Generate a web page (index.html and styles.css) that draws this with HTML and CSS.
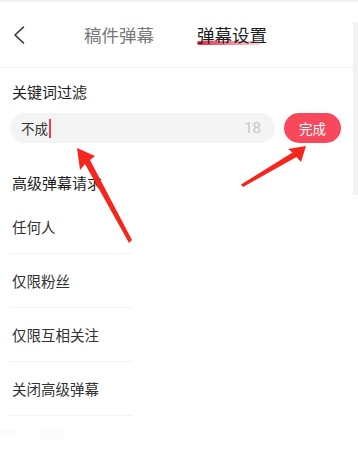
FILE: index.html
```html
<!DOCTYPE html>
<html lang="zh-CN">
<head>
    <meta charset="UTF-8">
    <meta name="viewport" content="width=device-width, initial-scale=1.0">
    <title>弹幕设置</title>
    <link rel="stylesheet" href="styles.css">
</head>
<body>
    <div id="page">
        <div id="main">
            <div id="header">
                <button class="back">
                    <svg width="12" height="20" viewBox="0 0 12 20">
                        <path d="M10.5 2 L2 10 L10.5 18" fill="none" stroke="#333" stroke-width="1.6" stroke-linecap="round" stroke-linejoin="round"/>
                    </svg>
                </button>
                <div class="tab">稿件弹幕</div>
                <div class="tab active">弹幕设置</div>
            </div>

            <div class="section-title first">关键词过滤</div>
            <div class="filter-row">
                <div class="filter-input">
                    <span class="typed">不成</span><span class="caret"></span>
                    <span class="count">18</span>
                </div>
                <button class="done">完成</button>
            </div>

            <div class="section-title">高级弹幕请求</div>
            <ul class="options">
                <li>任何人</li>
                <li>仅限粉丝</li>
                <li>仅限互相关注</li>
                <li>关闭高级弹幕</li>
            </ul>
            <div class="ghost">
                <span class="g1"></span>
                <span class="g2"></span>
            </div>
        </div>
        <div id="edge"></div>
    </div>

    <!-- annotation arrows -->
    <svg id="marks" width="358" height="463" viewBox="0 0 358 463">
        <g fill="#f5261e">
            <path d="M77 148 L95 156 L90 160 L132 240 L129 243 L85 164 L80 170 Z"/>
            <path d="M306 146 L301 162 L296.5 157 L243 187 L241 184.5 L292.5 152.5 L288 149 Z"/>
        </g>
    </svg>
</body>
</html>
```

FILE: styles.css
```css
body {
    font-family: "Noto Sans", "Noto Sans CJK SC", sans-serif;
    margin: 0;
    padding: 0;
    background: #fff;
    color: #222;
    width: 358px;
    height: 463px;
    overflow: hidden;
    position: relative;
}
#page {
    display: flex;
    border-top: 2px solid #f3f3f3;
}
#main {
    width: 353px;
}
#edge {
    width: 5px;
    height: 173px;
    margin-top: 20px;
    background-color: #f2f2f2;
}
#header {
    display: flex;
    align-items: center;
    height: 65px;
    border-bottom: 1px solid #f1f1f1;
}
.back {
    border: none;
    background: none;
    padding: 0;
    margin: 0 0 0 13px;
    width: 12px;
    height: 20px;
    display: flex;
    align-items: center;
}
.tab {
    font-size: 17.5px;
    line-height: 24px;
    color: #777;
    margin-left: 59px;
    position: relative;
    z-index: 0;
}
.tab.active {
    color: #1e1e1e;
    margin-left: 43px;
}
.tab.active::after {
    content: "";
    position: absolute;
    left: 0;
    bottom: 2px;
    width: 64px;
    height: 4px;
    border-radius: 2px;
    background: linear-gradient(90deg, #e42a48, rgba(240, 120, 140, 0.25));
    z-index: -1;
}
.section-title {
    font-size: 15px;
    line-height: 22px;
    color: #1e1e1e;
    padding-left: 12px;
    margin-top: 29px;
}
.section-title.first {
    margin-top: 13px;
}
.filter-row {
    display: flex;
    align-items: center;
    margin-top: 10px;
    padding: 0 12px 0 10px;
}
.filter-input {
    flex: 1;
    height: 30px;
    border-radius: 15px;
    background-color: #f4f4f4;
    display: flex;
    align-items: center;
    padding: 0 14px 0 11px;
    font-size: 13.5px;
    color: #333;
}
.caret {
    width: 1.5px;
    height: 19px;
    background-color: #ee3a52;
    margin-left: 1px;
}
.count {
    margin-left: auto;
    color: #c8c8c8;
    font-family: "Roboto", "Noto Sans", sans-serif;
    font-size: 15px;
}
.done {
    width: 57px;
    height: 30px;
    margin-left: 9px;
    border: none;
    border-radius: 15px;
    background-color: #f8485c;
    color: #fff;
    font-family: inherit;
    font-size: 13.5px;
    padding: 0;
}
.options {
    list-style: none;
    margin: 6px 0 0;
    padding: 0;
}
.options li {
    height: 54px;
    line-height: 54px;
    padding-left: 12px;
    font-size: 14.5px;
    color: #333;
    position: relative;
}
.options li::after {
    content: "";
    position: absolute;
    left: 10px;
    bottom: 0;
    width: 122px;
    height: 1px;
    background-color: #f3f3f3;
}
.ghost {
    display: flex;
    align-items: center;
    height: 30px;
    margin-top: 2px;
}
.ghost .g1 {
    width: 15px;
    height: 6px;
    background-color: #fbfbfb;
}
.ghost .g2 {
    width: 23px;
    height: 14px;
    margin-left: 25px;
    background-color: #fcfcfc;
}
#marks {
    position: absolute;
    left: 0;
    top: 0;
    pointer-events: none;
}
```
